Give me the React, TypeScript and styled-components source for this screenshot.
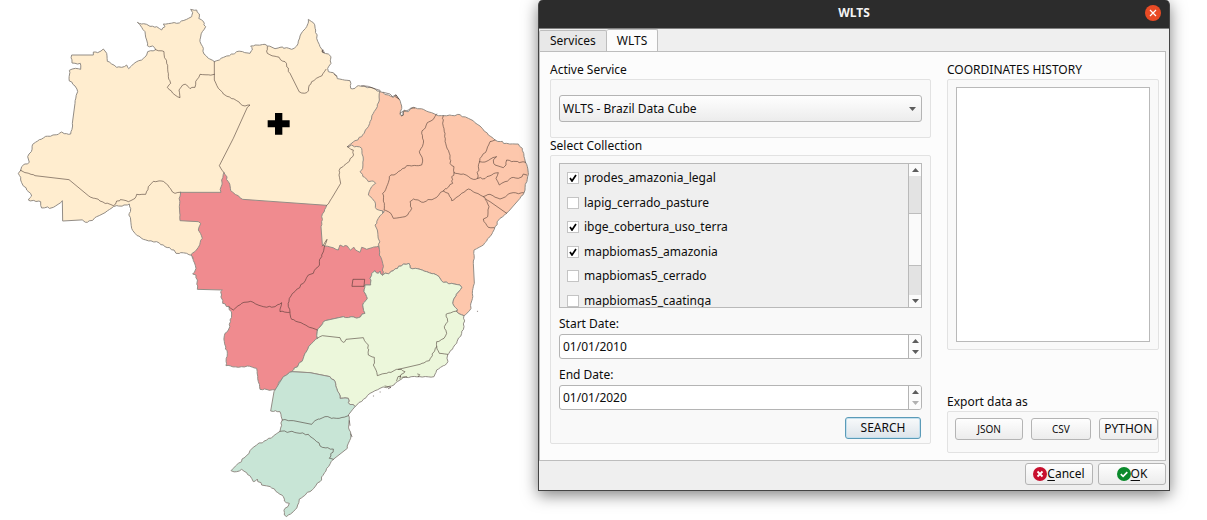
import React from "react";
import styled, { createGlobalStyle, css } from "styled-components";

const GlobalStyle = createGlobalStyle`
  * { box-sizing: border-box; }
  body { margin: 0; background: #fff; }
  body, button, input, select, textarea {
    font-family: "Noto Sans", "Open Sans", sans-serif;
    font-size: 12px;
    line-height: 16px;
    color: #0c0c0c;
  }
`;

const Page = styled.main`
  display: grid;
  grid-template-columns: minmax(0, 530fr) minmax(0, 632fr);
  gap: 8px;
  align-items: start;
  padding-right: 37px;
  overflow: hidden;
`;

const MapSvg = styled.svg`
  display: block;
  width: 100%;
  height: auto;
  stroke-linejoin: round;
  stroke-linecap: round;
`;

const Region = styled.path`
  stroke: #938d86;
  stroke-width: 3px;
`;

const Border = styled.path`
  fill: none;
  stroke: #40302a;
  stroke-opacity: 0.55;
  stroke-width: 3px;
`;

const Dialog = styled.section`
  display: flex;
  flex-direction: column;
  background: #efefef;
  border: 1px solid #444;
  border-top: 0;
  border-radius: 5px 5px 0 0;
  box-shadow: 0 4px 16px rgba(0, 0, 0, 0.5);
`;

const TitleBar = styled.header`
  display: grid;
  grid-template-columns: 24px 1fr 24px;
  align-items: center;
  height: 29px;
  padding: 0 4px 3px;
  background: #2c2c2c;
  border-bottom: 1px solid #808080;
  border-radius: 4px 4px 0 0;
`;

const Title = styled.h1`
  grid-column: 2;
  margin: 0;
  text-align: center;
  font-size: 12px;
  line-height: 16px;
  font-weight: 700;
  color: #f4f4f4;
`;

const CloseButton = styled.button`
  display: grid;
  place-items: center;
  width: 16px;
  height: 16px;
  padding: 0;
  border: 0;
  border-radius: 50%;
  background: #e94b25;
  justify-self: center;
`;

const Tabs = styled.nav`
  display: flex;
  align-items: flex-end;
  height: 22px;
`;

const Tab = styled.button<{ $active?: boolean }>`
  height: ${(p) => (p.$active ? 23 : 21)}px;
  padding: 0 10px;
  margin-bottom: ${(p) => (p.$active ? -1 : 0)}px;
  border: 1px solid #bdbdbd;
  border-bottom: 0;
  border-left-width: ${(p) => (p.$active ? 0 : 1)}px;
  border-radius: 2px 2px 0 0;
  background: ${(p) => (p.$active ? "#fcfcfc" : "#e8e8e8")};
`;

const Pane = styled.div`
  display: grid;
  grid-template-columns: minmax(0, 381fr) minmax(0, 212fr);
  gap: 16px;
  margin-right: 3px;
  padding: 10px 6px 7px 10px;
  background: #fcfcfc;
  border: 1px solid #bdbdbd;
`;

const Column = styled.div<{ $end?: number }>`
  display: flex;
  flex-direction: column;
  padding-bottom: ${(p) => p.$end ?? 0}px;
`;

const Group = styled.fieldset`
  min-width: 0;
  margin: 0;
  padding: 0;
  border: 0;
`;

const Legend = styled.legend`
  padding: 0;
  margin-bottom: 1px;
`;

const Frame = styled.div<{ $pad?: string }>`
  display: flex;
  flex-direction: column;
  padding: ${(p) => p.$pad ?? "7px 8px"};
  background: #f9f9f9;
  border: 1px solid #e2e2e2;
  border-radius: 2px;
`;

const raised = css`
  border: 1px solid #b4b4b4;
  border-radius: 3px;
  background: linear-gradient(#fefefe, #ececec);
`;

const SelectWrap = styled.div`
  display: grid;
  align-items: center;
  & > * { grid-area: 1 / 1; }
  & > svg { justify-self: end; margin-right: 6px; pointer-events: none; }
`;

const Select = styled.select`
  ${raised}
  appearance: none;
  width: 100%;
  height: 27px;
  padding: 0 3px;
`;

const ListBox = styled.div`
  display: grid;
  grid-template-columns: 1fr 13px;
  grid-template-rows: minmax(0, 1fr);
  height: 145px;
  border: 1px solid #b9b9b9;
  background: #efefef;
  overflow: hidden;
`;

const Items = styled.ul`
  display: grid;
  grid-auto-rows: 1fr;
  height: 149px;
  margin: 0;
  padding: 2px 7px 0;
  list-style: none;
`;

const Item = styled.label`
  display: flex;
  align-items: center;
  gap: 5px;
  height: 24px;
`;

const CheckWrap = styled.span`
  display: grid;
  place-items: center;
  & > * { grid-area: 1 / 1; }
  & > svg { display: none; pointer-events: none; }
  & > input:checked + svg { display: block; }
`;

const Check = styled.input`
  appearance: none;
  width: 12px;
  height: 12px;
  margin: 0;
  background: #fff;
  border: 1px solid #c4c4c4;
`;

const ScrollBar = styled.div`
  display: grid;
  grid-template-rows: 12px 37px 53px 1fr 12px;
  border-left: 1px solid #b9b9b9;
  background: #e3e3e3;
`;

const Arrow = styled.button`
  display: grid;
  place-items: center;
  min-height: 0;
  padding: 0;
  border: 0;
  background: #fbfbfb;
`;

const Thumb = styled.div`
  grid-row: 3;
  background: #fafafa;
  border: solid #bdbdbd;
  border-width: 1px 0;
`;

const Field = styled.div`
  display: flex;
  flex-direction: column;
  gap: 2px;
  margin-top: 8px;
`;

const Spin = styled.div`
  display: grid;
  grid-template-columns: 1fr 13px;
  height: 25px;
  border: 1px solid #b4b4b4;
  border-radius: 3px;
  background: #fff;
  overflow: hidden;
`;

const DateInput = styled.input`
  min-width: 0;
  padding: 0 3px;
  border: 0;
  background: transparent;
`;

const SpinButtons = styled.div`
  display: grid;
  grid-template-rows: 1fr 1fr;
  border-left: 1px solid #b4b4b4;
`;

const Button = styled.button<{ $primary?: boolean; $small?: boolean }>`
  ${raised}
  display: flex;
  align-items: center;
  justify-content: center;
  height: 22px;
  padding: 0;
  white-space: nowrap;
  font-size: ${(p) => (p.$small ? 10 : 12)}px;
  ${(p) =>
    p.$primary &&
    css`
      align-self: flex-end;
      width: 76px;
      margin: 7px 1px 0 0;
      border-color: #5b9bb8;
      background: linear-gradient(#f8fafb, #dde4ea);
      box-shadow: inset 0 0 0 1px #c4e0ee;
    `}
`;

const History = styled.textarea`
  display: block;
  width: 100%;
  height: 255px;
  resize: none;
  background: #fff;
  border: 1px solid #b9b9b9;
`;

const Exports = styled.div`
  display: grid;
  grid-template-columns: 69fr 60fr 60fr;
  gap: 8px;
`;

const Spacer = styled.div`
  flex: 1;
`;

const Footer = styled.footer`
  display: flex;
  justify-content: flex-end;
  gap: 5px;
  padding: 2px 3px 5px;
  & > button { width: 68px; }
  & u { text-underline-offset: 2px; }
`;

const Triangle = ({ up, dim }: { up?: boolean; dim?: boolean }) => (
  <svg width="7" height="4" viewBox="0 0 7 4" aria-hidden="true">
    <path d={up ? "M0 4L3.5 0 7 4z" : "M0 0h7L3.5 4z"} fill={dim ? "#b0b0b0" : "#5c5c5c"} />
  </svg>
);

// Breaks short stretches of coast or border into smaller, slightly irregular
// steps. The shift depends only on position, so neighbours share one line.
const shift = (x: number, y: number, k: number) => {
  const v = Math.sin(x * 12.9898 + y * 78.233 + k * 37.7) * 43758.5453;
  return (v - Math.floor(v) - 0.5) * 5;
};

const rugged = (d: string) =>
  d
    .split("M")
    .filter(Boolean)
    .map((part) => {
      const closed = part.endsWith("Z");
      const n = (part.match(/\d+/g) ?? []).map(Number);
      const pts: [number, number][] = [];
      for (let i = 0; i < n.length; i += 2) pts.push([n[i], n[i + 1]]);
      if (closed) pts.push(pts[0]);
      const out = [pts[0].join(" ")];
      for (let i = 1; i < pts.length; i++) {
        const [ax, ay] = pts[i - 1];
        const [bx, by] = pts[i];
        const len = Math.hypot(bx - ax, by - ay);
        const steps = len < 52 ? Math.max(1, Math.round(len / 8)) : 1;
        for (let s = 1; s < steps; s++) {
          const x = Math.round(ax + ((bx - ax) * s) / steps);
          const y = Math.round(ay + ((by - ay) * s) / steps);
          out.push(`${(x + shift(x, y, 1)).toFixed(1)} ${(y + shift(x, y, 2)).toFixed(1)}`);
        }
        out.push(`${bx} ${by}`);
      }
      return `M${out.join("L")}${closed ? "Z" : ""}`;
    })
    .join("");

const regions = [
  {
    name: "Norte",
    fill: "#ffedcf",
    d: "M62 511L65 500 75 492 88 487 83 470 87 462 94 455 98 433 118 419 137 409 175 403 185 396 200 401 212 402 217 370 225 310 233 275 225 258 208 243 208 211 226 205 242 208 241 190 216 189 215 165 280 165 280 156 293 158 303 153 310 147 320 160 322 184 335 192 350 202 365 202 380 195 386 206 400 192 425 180 440 165 443 155 467 149 458 138 442 137 440 120 435 95 425 82 412 67 425 72 440 73 450 79 470 80 485 90 495 80 490 72 530 70 560 58 575 50 578 38 572 28 590 30 598 42 596 55 608 62 617 80 607 95 600 125 610 145 612 162 625 175 643 185 658 180 680 168 700 162 710 155 750 160 757 150 752 138 765 135 795 133 803 138 825 146 840 142 860 143 875 148 890 138 900 108 920 80 925 58 940 68 947 90 950 115 960 140 968 157 985 162 993 170 993 190 983 205 985 215 1000 218 1010 227 1012 236 1050 242 1052 265 1065 265 1075 257 1110 262 1140 274L1150 740 1100 780 600 800 575 766 560 760 528 760 522 750 495 740 470 725 430 718 405 700 395 685 392 660 388 640 392 625 388 612 372 615 340 620 315 638 290 650 262 667 240 660 188 663 187 602 160 622 125 624 122 605 85 600 95 588 80 570 62 540 55 520Z",
  },
  {
    name: "Nordeste",
    fill: "#fdc7ac",
    d: "M1140 275L1165 285 1180 292 1188 285 1198 298 1205 318 1201 345 1209 347 1212 330 1225 335 1240 322 1270 328 1295 338 1310 345 1330 347 1380 344 1405 355 1440 378 1465 405 1485 420 1520 430 1555 432 1567 445 1572 470 1582 500 1583 530 1575 570 1560 595 1525 635 1500 655 1485 680 1470 710 1445 738 1422 750 1420 790 1423 850 1417 880 1413 925 1392 947 1370 935 1372 928 1358 910 1362 895 1385 862 1380 855 1330 847 1310 825 1280 815 1260 808 1230 803 1227 790 1210 792 1180 812 1148 825 1142 790 1137 765 1137 740 1137 720 1132 690 1125 675 1135 655 1153 635 1130 628 1120 600 1105 585 1115 560 1127 550 1120 543 1105 545 1080 515 1088 505 1090 480 1085 445 1055 435 1042 440 1065 422 1085 410 1105 380 1110 365 1120 340 1132 320 1138 300Z",
  },
  {
    name: "Centro-Oeste",
    fill: "#f08b8f",
    d: "M542 577L663 577 665 540 672 518 685 545 692 572 710 585 728 598 980 616 965 650 963 680 967 735 1015 750 1020 735 1030 740 1042 738 1052 750 1062 742 1080 757 1085 742 1100 748 1135 738 1138 765 1148 790 1148 825 1140 813 1135 820 1125 812 1115 820 1110 835 1112 855 1095 855 1092 875 1102 895 1088 915 1095 940 1075 953 1030 950 975 962 952 990 952 1015 930 1035 910 1075 895 1095 875 1115 850 1130 835 1150 825 1170 780 1168 775 1145 770 1105 742 1098 715 1102 678 1097 682 1060 673 1025 675 1000 685 990 695 942 687 920 668 910 662 875 667 870 592 868 588 825 578 822 588 805 578 770 573 765 595 742 607 715 595 690 602 670 595 665 540 662 538 620Z",
  },
  {
    name: "Sudeste",
    fill: "#ecf7db",
    d: "M1148 825L1180 812 1210 792 1227 790 1230 803 1260 808 1280 815 1310 825 1330 847 1380 855 1385 862 1362 895 1358 910 1372 928 1370 935 1392 947 1392 980 1385 1000 1370 1030 1343 1065 1341 1090 1310 1110 1302 1130 1260 1130 1210 1132 1192 1145 1175 1158 1140 1165 1110 1180 1090 1198 1065 1220 1045 1208 1045 1195 1020 1195 1010 1165 1005 1145 990 1130 930 1118 875 1115 895 1095 910 1075 930 1035 952 1015 952 990 975 962 1030 950 1075 953 1095 940 1088 915 1102 895 1092 875 1095 855 1112 855 1110 835 1115 820 1125 812 1135 820 1140 813Z",
  },
  {
    name: "Sul",
    fill: "#c8e5d6",
    d: "M875 1115L930 1118 990 1130 1005 1145 1010 1165 1020 1195 1045 1195 1045 1208 1065 1220 1045 1245 1048 1290 1053 1305 1042 1345 1000 1378 980 1405 960 1445 930 1475 898 1497 893 1515 880 1535 860 1550 853 1545 855 1525 868 1510 853 1503 850 1490 840 1483 815 1464 785 1455 772 1437 760 1445 755 1435 740 1418 725 1408 710 1415 693 1412 700 1405 715 1390 735 1372 750 1352 770 1335 800 1320 820 1308 840 1294 847 1260 840 1235 812 1233 822 1175 850 1130Z",
  },
];

const borders = [
  "M467 149L492 155 500 190 505 230 512 250 502 262 525 285 540 293 537 270 548 255 560 255 570 266 585 262 590 240 600 223 643 223",
  "M643 185L643 240 655 265 670 282 710 302 735 318 750 315 742 322 700 415 658 497 672 518",
  "M62 511L105 527 207 539 265 587 300 603 340 617 350 603 370 600 385 605 405 595 410 583 437 583 445 560 460 544 490 544 525 580 540 577",
  "M802 140L802 160 830 170 855 185 870 220 895 270 905 279 920 278 935 245 965 228 978 208",
  "M1042 440L1060 450 1058 470 1040 490 1020 505 1017 525 1022 550 995 595 980 616",
  "M1310 342L1300 358 1282 368 1265 400 1270 430 1258 455 1268 480 1265 495 1250 497 1220 497 1190 520 1168 530 1160 560 1148 580 1153 610 1152 630 1165 635 1180 655 1215 650 1235 625 1230 605 1240 597 1270 607 1310 592 1330 573 1358 550 1355 530 1362 518",
  "M1330 347L1328 370 1335 400 1337 430 1348 460 1350 490 1362 500 1362 518 1390 522 1420 538 1433 535 1455 536 1475 525 1495 518 1488 535 1498 555 1515 545 1535 533 1555 535 1570 522 1580 525",
  "M1485 420L1470 425 1460 450 1440 475 1435 500 1433 535",
  "M1438 485L1455 486 1470 478 1490 470 1480 480 1485 495 1510 503 1518 495 1520 480 1535 485 1577 487",
  "M1330 573L1345 580 1355 602 1380 585 1405 567 1425 578 1450 590 1470 583 1500 597 1530 580 1570 578",
  "M1450 590L1470 605 1520 640M1455 597L1467 620 1463 650 1450 657 1465 682 1482 683",
  "M967 738L981 718 975 735 965 765 955 800 940 820 925 825 910 850 890 868 868 895 865 920 870 937 875 958 910 972 952 990",
  "M687 920L700 930 725 910 752 904 790 920 825 920 845 908 840 935 868 937",
  "M952 1015L967 1007 1020 1013 1030 1027 1038 1018 1090 1013 1105 1035 1105 1065 1123 1072 1120 1095 1132 1127 1160 1120 1195 1108 1260 1093 1288 1082 1310 1040 1310 1025 1332 1015 1340 1000 1333 980 1343 965 1338 943 1360 935 1370 933",
  "M1310 1040L1318 1060 1343 1063M1195 1108L1215 1115 1200 1130",
  "M847 1260L880 1262 935 1273 945 1262 975 1250 1010 1255 1045 1247",
  "M840 1294L870 1295 900 1300 925 1303 950 1325 967 1342 1000 1347 988 1375 1000 1378",
];

const BrazilMap = () => (
  <MapSvg viewBox="0 0 1590 1560" role="img" aria-label="Map of Brazil by state">
    {regions.map((r) => (
      <Region key={r.name} d={rugged(r.d)} fill={r.fill} />
    ))}
    {borders.map((d) => (
      <Border key={d} d={rugged(d)} />
    ))}
    {/* Federal District */}
    <Border d="M1060 838H1094L1092 859H1057Z" />
    {/* islands and inlets along the coast */}
    <Border d="M969 150l4 8-6-2zM1003 222l6 6M1085 257l20 2 15 6 20 6M1150 277l20 5 8 8 10-6 6 10 4 4-12-8M1200 340l8-6 2 10-6 4M1212 334l14-4 6-6 12 0M1190 1142l4-12 8-2-2 8M1206 1132l14-2M1253 1122l6 2-4 6M1155 1158l18 4-8 4M1120 1188h1M1140 1176h1M1432 934h1M1052 1302l4 8M1048 1262l2 14" />
    <path d="M825 339h22v22h22v21h-22v22h-22v-22h-22v-21h22z" fill="#000" />
  </MapSvg>
);

const collections: [string, boolean][] = [
  ["prodes_amazonia_legal", true],
  ["lapig_cerrado_pasture", false],
  ["ibge_cobertura_uso_terra", true],
  ["mapbiomas5_amazonia", true],
  ["mapbiomas5_cerrado", false],
  ["mapbiomas5_caatinga", false],
];

const DateField = ({ id, label, value, last }: { id: string; label: string; value: string; last?: boolean }) => (
  <Field>
    <label htmlFor={id}>{label}</label>
    <Spin>
      <DateInput id={id} type="text" defaultValue={value} />
      <SpinButtons>
        <Arrow aria-label="Increase"><Triangle up /></Arrow>
        <Arrow aria-label="Decrease" disabled={last}><Triangle dim={last} /></Arrow>
      </SpinButtons>
    </Spin>
  </Field>
);

export default function App() {
  return (
    <>
      <GlobalStyle />
      <Page>
        <BrazilMap />
        <Dialog role="dialog" aria-labelledby="title">
          <TitleBar>
            <Title id="title">WLTS</Title>
            <CloseButton aria-label="Close">
              <svg width="8" height="8" viewBox="0 0 8 8">
                <path d="M1 1l6 6M7 1L1 7" stroke="#fff" strokeWidth="1.2" />
              </svg>
            </CloseButton>
          </TitleBar>
          <Tabs>
            <Tab>Services</Tab>
            <Tab $active>WLTS</Tab>
          </Tabs>
          <Pane>
            <Column $end={9}>
              <Group>
                <Legend>Active Service</Legend>
                <Frame $pad="15px 8px">
                  <SelectWrap>
                    <Select aria-label="Active Service" defaultValue="bdc">
                      <option value="bdc">WLTS - Brazil Data Cube</option>
                    </Select>
                    <Triangle />
                  </SelectWrap>
                </Frame>
              </Group>
              <Group>
                <Legend>Select Collection</Legend>
                <Frame $pad="7px 8px 4px">
                  <ListBox>
                    <Items>
                      {collections.map(([name, on]) => (
                        <li key={name}>
                          <Item>
                            <CheckWrap>
                              <Check type="checkbox" defaultChecked={on} />
                              <svg width="8" height="8" viewBox="0 0 8 8">
                                <path d="M1 4l2 3L7 1" fill="none" stroke="#000" strokeWidth="1.7" />
                              </svg>
                            </CheckWrap>
                            {name}
                          </Item>
                        </li>
                      ))}
                    </Items>
                    <ScrollBar>
                      <Arrow aria-label="Scroll up"><Triangle up /></Arrow>
                      <span />
                      <Thumb />
                      <span />
                      <Arrow aria-label="Scroll down"><Triangle /></Arrow>
                    </ScrollBar>
                  </ListBox>
                  <DateField id="start" label="Start Date:" value="01/01/2010" />
                  <DateField id="end" label="End Date:" value="01/01/2020" last />
                  <Button $primary>SEARCH</Button>
                </Frame>
              </Group>
            </Column>
            <Column>
              <Group>
                <Legend>COORDINATES HISTORY</Legend>
                <Frame>
                  <History aria-label="Coordinates history" />
                </Frame>
              </Group>
              <Spacer />
              <Group>
                <Legend>Export data as</Legend>
                <Frame $pad="6px 0 12px 7px">
                  <Exports>
                    <Button $small>JSON</Button>
                    <Button $small>CSV</Button>
                    <Button>PYTHON</Button>
                  </Exports>
                </Frame>
              </Group>
            </Column>
          </Pane>
          <Footer>
            <Button>
              <svg width="14" height="14" viewBox="0 0 14 14" aria-hidden="true">
                <circle cx="7" cy="7" r="7" fill="#c8102e" />
                <path d="M4.5 4.5l5 5M9.5 4.5l-5 5" stroke="#fff" strokeWidth="1.8" />
              </svg>
              <span><u>C</u>ancel</span>
            </Button>
            <Button>
              <svg width="14" height="14" viewBox="0 0 14 14" aria-hidden="true">
                <circle cx="7" cy="7" r="7" fill="#0b8a2c" />
                <path d="M3.8 7.2l2.3 2.2 4.2-4.3" fill="none" stroke="#fff" strokeWidth="1.6" />
              </svg>
              <span><u>O</u>K</span>
            </Button>
          </Footer>
        </Dialog>
      </Page>
    </>
  );
}
